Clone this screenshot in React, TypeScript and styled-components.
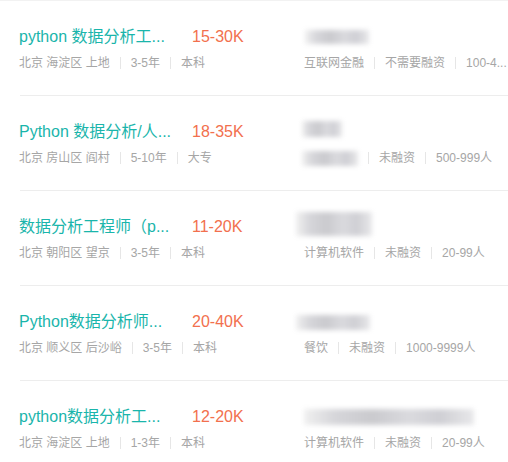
import React from 'react';
import styled, { createGlobalStyle } from 'styled-components';

const GlobalStyle = createGlobalStyle`
  html, body {
    margin: 0;
    padding: 0;
    background: #fff;
  }
  body {
    font-family: "Liberation Sans", Arial, "Noto Sans CJK SC", sans-serif;
  }
`;

const List = styled.ul`
  list-style: none;
  margin: 0;
  padding: 0;
  width: 508px;
  border-top: 1px solid #f2f2f2;
  overflow: hidden;
`;

const Item = styled.li`
  display: grid;
  grid-template-columns: 284px 1fr;
  height: 95px;
  margin-left: 20px;
  border-bottom: 1px solid #ededed;
  box-sizing: border-box;
`;

const Left = styled.div`
  display: flex;
  flex-direction: column;
  padding-top: 26px;
  margin-left: -1px;
`;

const Right = styled.div`
  display: flex;
  flex-direction: column;
  padding-top: 26px;
  min-width: 0;
`;

const TopLine = styled.div`
  display: flex;
  align-items: center;
  height: 20px;
`;

const Title = styled.a`
  width: 173px;
  flex: none;
  color: #1ab5ab;
  font-size: 16px;
  line-height: 20px;
  white-space: nowrap;
  text-decoration: none;
`;

const Salary = styled.span`
  color: #f2704e;
  font-size: 16px;
  line-height: 20px;
`;

const Meta = styled.div`
  margin-top: 8px;
  height: 16px;
  font-size: 12px;
  line-height: 16px;
  color: #a6a6a6;
  white-space: nowrap;
`;

const Sep = styled.span`
  display: inline-block;
  width: 1px;
  height: 12px;
  margin: 0 10px;
  vertical-align: -2px;
  background: #e6e6e6;
`;

const Blur = styled.span<{ $w: number; $h: number; $dx?: number; $dy?: number }>`
  display: inline-block;
  width: ${(p) => p.$w}px;
  height: ${(p) => p.$h}px;
  margin-left: ${(p) => p.$dx ?? 0}px;
  margin-top: ${(p) => p.$dy ?? 0}px;
  vertical-align: middle;
  filter: blur(2.5px);
  background: linear-gradient(
    90deg,
    #f0f0f0 0%,
    #d6d6da 18%,
    #cacace 40%,
    #dadade 62%,
    #cfcfd4 80%,
    #e8e8ea 100%
  );
`;

const CompanyLine = styled.div`
  display: flex;
  align-items: center;
  height: 20px;
`;

type Job = {
  title: string;
  salary: string;
  place: string;
  exp: string;
  edu: string;
  company: { w: number; h: number; dx?: number; dy?: number };
  industry?: string;
  industryBlur?: number;
  stage: string;
  size: string;
};

const jobs: Job[] = [
  {
    title: 'python 数据分析工...',
    salary: '15-30K',
    place: '北京 海淀区 上地',
    exp: '3-5年',
    edu: '本科',
    company: { w: 64, h: 14, dx: 1 },
    industry: '互联网金融',
    stage: '不需要融资',
    size: '100-4...',
  },
  {
    title: 'Python 数据分析/人...',
    salary: '18-35K',
    place: '北京 房山区 阎村',
    exp: '5-10年',
    edu: '大专',
    company: { w: 40, h: 16, dx: -2, dy: -6 },
    industryBlur: 56,
    stage: '未融资',
    size: '500-999人',
  },
  {
    title: '数据分析工程师（p...',
    salary: '11-20K',
    place: '北京 朝阳区 望京',
    exp: '3-5年',
    edu: '本科',
    company: { w: 76, h: 24, dx: -8, dy: -6 },
    industry: '计算机软件',
    stage: '未融资',
    size: '20-99人',
  },
  {
    title: 'Python数据分析师...',
    salary: '20-40K',
    place: '北京 顺义区 后沙峪',
    exp: '3-5年',
    edu: '本科',
    company: { w: 74, h: 15, dx: -8 },
    industry: '餐饮',
    stage: '未融资',
    size: '1000-9999人',
  },
  {
    title: 'python数据分析工...',
    salary: '12-20K',
    place: '北京 海淀区 上地',
    exp: '1-3年',
    edu: '本科',
    company: { w: 170, h: 16, dx: 0 },
    industry: '计算机软件',
    stage: '未融资',
    size: '20-99人',
  },
];

function JobItem({ job }: { job: Job }) {
  return (
    <Item>
      <Left>
        <TopLine>
          <Title href="#">{job.title}</Title>
          <Salary>{job.salary}</Salary>
        </TopLine>
        <Meta>
          {job.place}
          <Sep />
          {job.exp}
          <Sep />
          {job.edu}
        </Meta>
      </Left>
      <Right>
        <CompanyLine>
          <Blur $w={job.company.w} $h={job.company.h} $dx={job.company.dx} $dy={job.company.dy} />
        </CompanyLine>
        <Meta>
          {job.industryBlur ? <Blur $w={job.industryBlur} $h={15} $dx={-2} /> : job.industry}
          <Sep />
          {job.stage}
          <Sep />
          {job.size}
        </Meta>
      </Right>
    </Item>
  );
}

export default function App() {
  return (
    <>
      <GlobalStyle />
      <List>
        {jobs.map((job) => (
          <JobItem key={job.title + job.salary} job={job} />
        ))}
      </List>
    </>
  );
}
